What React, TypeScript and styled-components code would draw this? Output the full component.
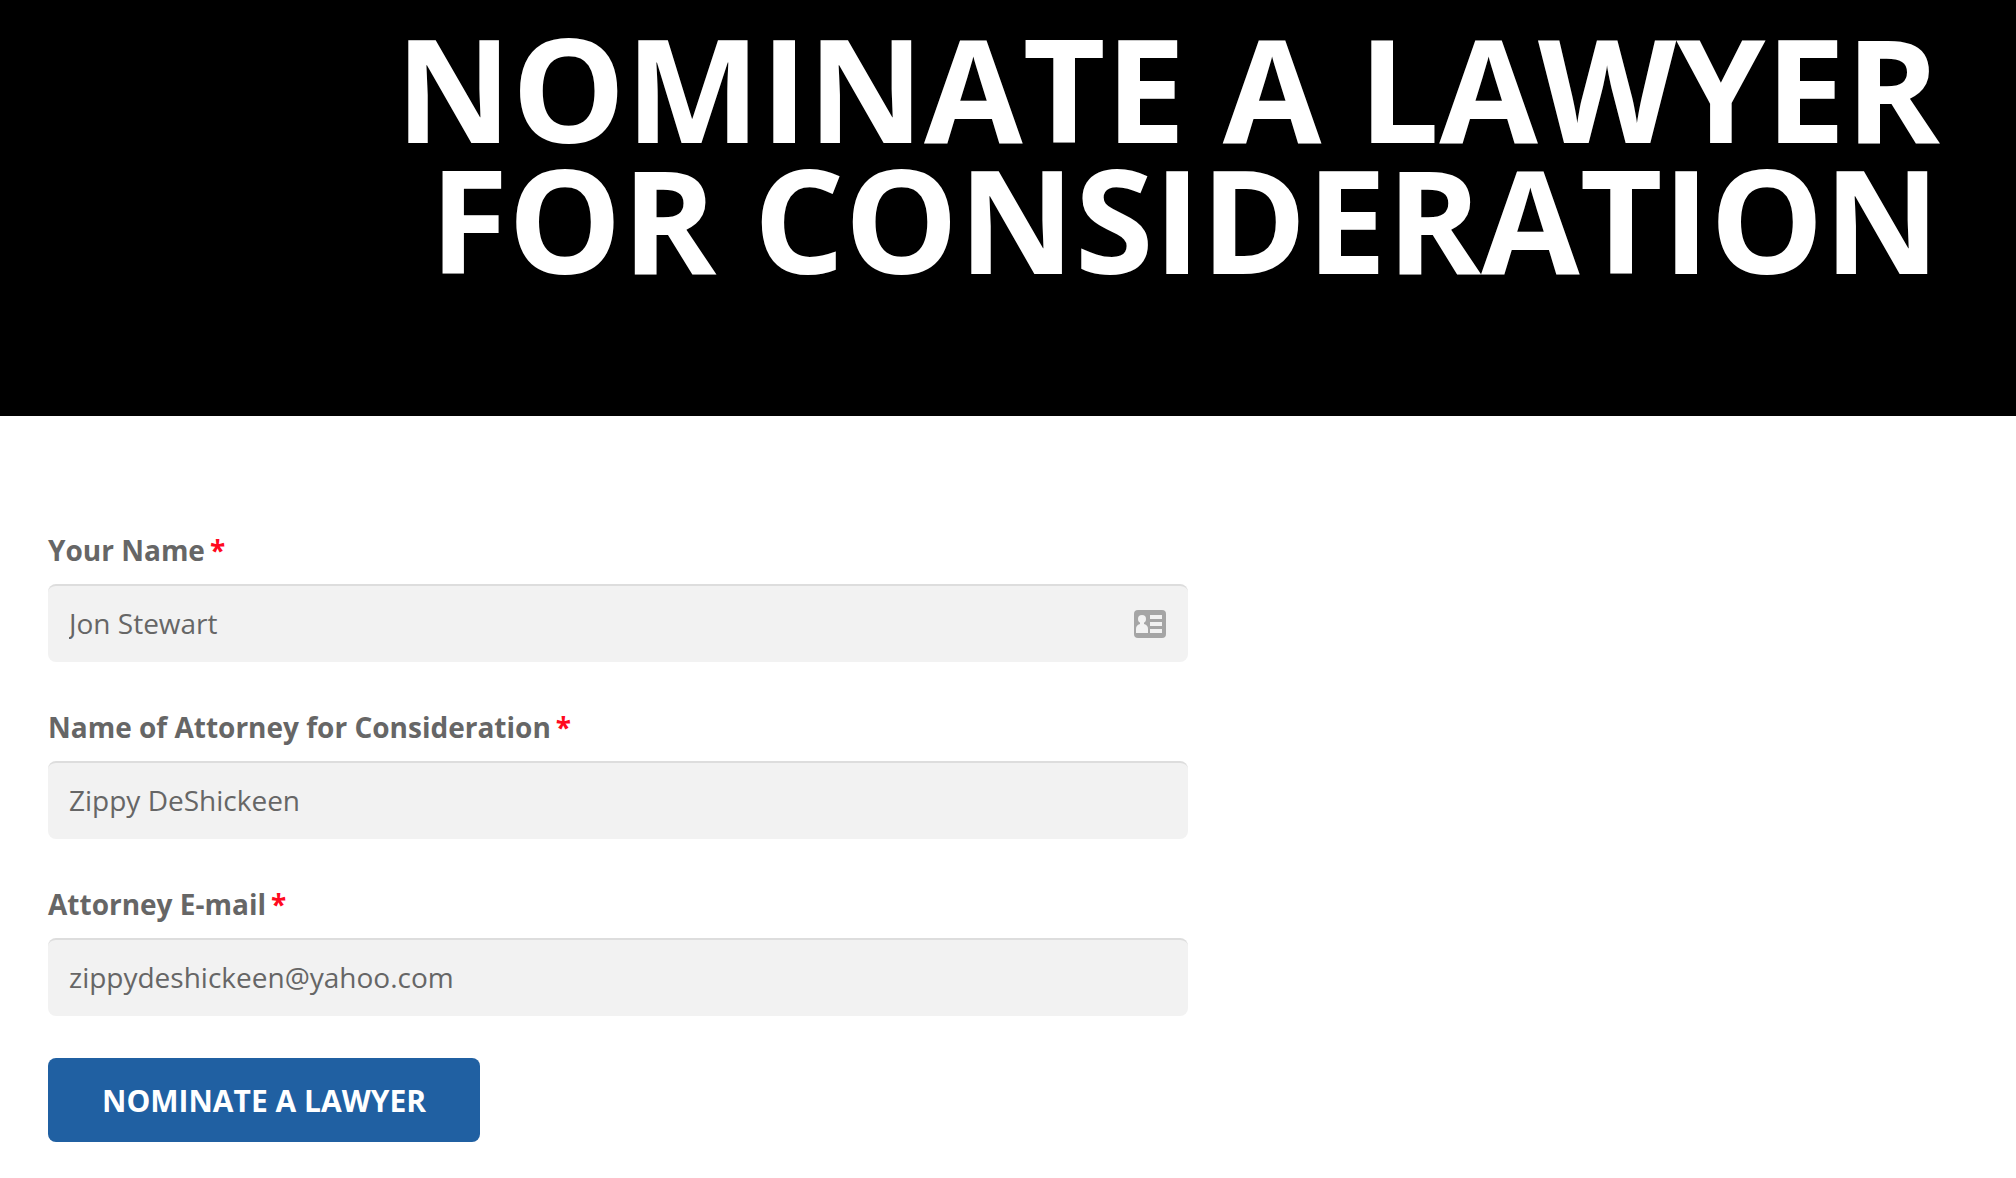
import React, { useState } from "react";
import styled, { createGlobalStyle } from "styled-components";

const GlobalStyle = createGlobalStyle`
  *, *::before, *::after {
    box-sizing: border-box;
  }
  body {
    margin: 0;
    background: #ffffff;
    color: #666666;
    font-family: "Open Sans", "Noto Sans", sans-serif;
    font-size: 28px;
  }
`;

const Banner = styled.header`
  display: flex;
  justify-content: flex-end;
  padding: 22px 76px 132px;
  background: #000000;
`;

const Title = styled.h1`
  margin: 0;
  color: #ffffff;
  font-size: 143px;
  font-weight: 700;
  line-height: 131px;
  text-align: right;
`;

const TitleLine = styled.span`
  display: block;
  white-space: nowrap;
`;

const Form = styled.form`
  display: flex;
  flex-direction: column;
  gap: 45px;
  max-width: 1236px;
  padding: 114px 48px 36px;
`;

const Field = styled.div`
  display: flex;
  flex-direction: column;
  gap: 14px;
`;

const Label = styled.label`
  display: flex;
  gap: 5px;
  font-weight: 700;
  line-height: 40px;
`;

const Required = styled.span`
  color: #ff0a1f;
`;

const InputBox = styled.div`
  display: flex;
  align-items: center;
  height: 78px;
  padding: 0 21px;
  border-top: 2px solid #dddddd;
  border-radius: 8px;
  background: #f2f2f2;
`;

const Input = styled.input`
  flex: 1;
  min-width: 0;
  padding: 0 0 2px;
  border: 0;
  outline: 0;
  background: transparent;
  color: #666666;
  font: inherit;
  line-height: 40px;
`;

const Submit = styled.button`
  align-self: flex-start;
  height: 84px;
  margin-top: -3px;
  padding: 0 54px;
  border: 0;
  border-radius: 8px;
  background: #2060a2;
  color: #ffffff;
  font: inherit;
  font-size: 30px;
  font-weight: 700;
  cursor: pointer;
`;

const CardIcon = () => (
  <svg width="34" height="28" viewBox="0 0 34 28" aria-hidden="true">
    <rect x="1" y="0" width="32" height="28" rx="4" fill="#a5a5a5" />
    <circle cx="9" cy="9" r="4" fill="#f2f2f2" />
    <path d="M7 11h4v3c3 1 4 2.500 4 5v4H3v-4c0-2.500 1-4 4-5z" fill="#f2f2f2" />
    <path d="M17 5h12v4H17zM17 12h12v4H17zM17 19h12v4H17z" fill="#f2f2f2" />
  </svg>
);

type FieldSpec = {
  id: string;
  label: string;
  type: string;
  initial: string;
  contactIcon?: boolean;
};

const fields: FieldSpec[] = [
  { id: "your-name", label: "Your Name", type: "text", initial: "Jon Stewart", contactIcon: true },
  { id: "attorney-name", label: "Name of Attorney for Consideration", type: "text", initial: "Zippy DeShickeen" },
  { id: "attorney-email", label: "Attorney E-mail", type: "email", initial: "zippydeshickeen@yahoo.com" },
];

const FormField = ({ id, label, type, initial, contactIcon }: FieldSpec) => {
  const [value, setValue] = useState(initial);
  return (
    <Field>
      <Label htmlFor={id}>
        {label}
        <Required>*</Required>
      </Label>
      <InputBox>
        <Input id={id} type={type} required value={value} onChange={(e) => setValue(e.target.value)} />
        {contactIcon && <CardIcon />}
      </InputBox>
    </Field>
  );
};

export default function App() {
  return (
    <>
      <GlobalStyle />
      <Banner>
        <Title>
          <TitleLine>NOMINATE A LAWYER</TitleLine>
          <TitleLine>FOR CONSIDERATION</TitleLine>
        </Title>
      </Banner>
      <main>
        <Form onSubmit={(e) => e.preventDefault()}>
          {fields.map((field) => (
            <FormField key={field.id} {...field} />
          ))}
          <Submit type="submit">NOMINATE A LAWYER</Submit>
        </Form>
      </main>
    </>
  );
}
